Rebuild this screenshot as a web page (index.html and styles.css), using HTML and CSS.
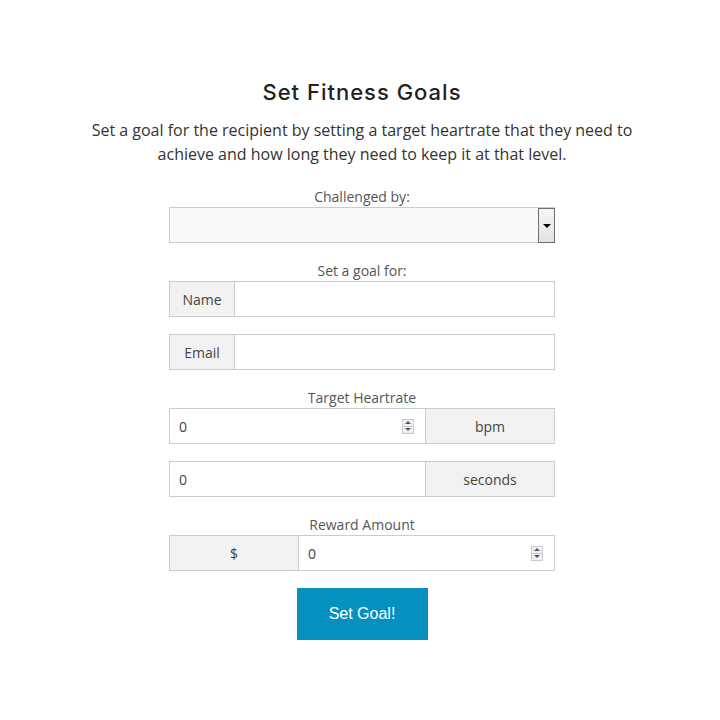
FILE: index.html
```html
<!DOCTYPE html>
<html>
<head>
<meta charset="utf-8">
<link rel="stylesheet" href="styles.css">
</head>
<body>
<div class="page">
  <h1 class="title">Set Fitness Goals</h1>
  <p class="desc">Set a goal for the recipient by setting a target heartrate that they need to achieve and how long they need to keep it at that level.</p>
  <form class="form">
    <div class="label">Challenged by:</div>
    <div class="select">
      <span class="select-btn"><span class="tri"></span></span>
    </div>

    <div class="label gap">Set a goal for:</div>
    <div class="group">
      <span class="addon addon-sm">Name</span>
      <span class="field"></span>
    </div>
    <div class="group mt">
      <span class="addon addon-sm">Email</span>
      <span class="field"></span>
    </div>

    <div class="label gap">Target Heartrate</div>
    <div class="group">
      <span class="field num"><span class="val">0</span><span class="spin"><span class="up"></span><span class="down"></span></span></span>
      <span class="addon addon-lg">bpm</span>
    </div>
    <div class="group mt">
      <span class="field num"><span class="val">0</span></span>
      <span class="addon addon-lg">seconds</span>
    </div>

    <div class="label gap">Reward Amount</div>
    <div class="group">
      <span class="addon addon-lg addon-left">$</span>
      <span class="field num"><span class="val">0</span><span class="spin"><span class="up"></span><span class="down"></span></span></span>
    </div>

    <div class="actions">
      <button type="button" class="btn">Set Goal!</button>
    </div>
  </form>
</div>
</body>
</html>
```

FILE: styles.css
```css
html, body {
  margin: 0;
  padding: 0;
  background: #fff;
}
.page {
  width: 720px;
  padding-top: 78px;
  padding-left: 2px;
  display: flex;
  flex-direction: column;
  align-items: center;
  font-family: "Open Sans", "Liberation Sans", sans-serif;
  color: #333;
}
.title {
  margin: 0;
  font-family: "Inter", "Noto Sans", sans-serif;
  font-weight: 500;
  font-size: 22px;
  line-height: 28px;
  letter-spacing: 1px;
  color: #222;
}
.desc {
  margin: 12px 0 0;
  width: 560px;
  text-align: center;
  font-size: 16px;
  line-height: 24px;
  color: #333;
}
.form {
  margin-top: 21px;
  width: 386px;
  display: flex;
  flex-direction: column;
}
.label {
  height: 20px;
  line-height: 20px;
  text-align: center;
  font-size: 14px;
  color: #555;
}
.label.gap {
  margin-top: 18px;
}
.select {
  height: 36px;
  box-sizing: border-box;
  border: 1px solid #ccc;
  background: #fafafa;
  display: flex;
  justify-content: flex-end;
}
.select-btn {
  width: 17px;
  margin: 0 -1px -1px 0;
  box-sizing: border-box;
  border: 1px solid #6e6e6e;
  background: linear-gradient(#f6f6f6, #e2e2e2);
  display: flex;
  align-items: center;
  justify-content: center;
}
.tri {
  width: 0;
  height: 0;
  border-left: 4px solid transparent;
  border-right: 4px solid transparent;
  border-top: 4px solid #000;
  margin-top: 1px;
}
.group {
  height: 36px;
  box-sizing: border-box;
  border: 1px solid #ccc;
  display: flex;
}
.group.mt {
  margin-top: 17px;
}
.addon {
  background: #f2f2f2;
  display: flex;
  align-items: center;
  justify-content: center;
  font-size: 14px;
  color: #444;
}
.addon-sm {
  width: 64px;
  border-right: 1px solid #ccc;
}
.addon-lg {
  width: 128px;
  border-left: 1px solid #ccc;
}
.addon-left {
  border-left: none;
  border-right: 1px solid #ccc;
}
.field {
  flex: 1;
  background: #fff;
  display: flex;
  align-items: center;
}
.field.num {
  padding: 0 11px 0 9px;
}
.val {
  flex: 1;
  font-size: 14px;
  color: #444;
}
.spin {
  width: 12px;
  height: 15px;
  display: flex;
  flex-direction: column;
  border: 1px solid #c5cad3;
  box-sizing: border-box;
  background: #eef0f4;
}
.up, .down {
  flex: 1;
  display: flex;
  align-items: center;
  justify-content: center;
}
.up {
  border-bottom: 1px solid #c5cad3;
}
.up::after {
  content: "";
  border-left: 3px solid transparent;
  border-right: 3px solid transparent;
  border-bottom: 3px solid #556;
}
.down::after {
  content: "";
  border-left: 3px solid transparent;
  border-right: 3px solid transparent;
  border-top: 3px solid #556;
}
.actions {
  margin-top: 17px;
  display: flex;
  justify-content: center;
}
.btn {
  width: 131px;
  height: 52px;
  border: none;
  background: #0590c0;
  color: #fff;
  font-family: "Liberation Sans", Arial, sans-serif;
  font-size: 16px;
  padding: 0;
}
```
